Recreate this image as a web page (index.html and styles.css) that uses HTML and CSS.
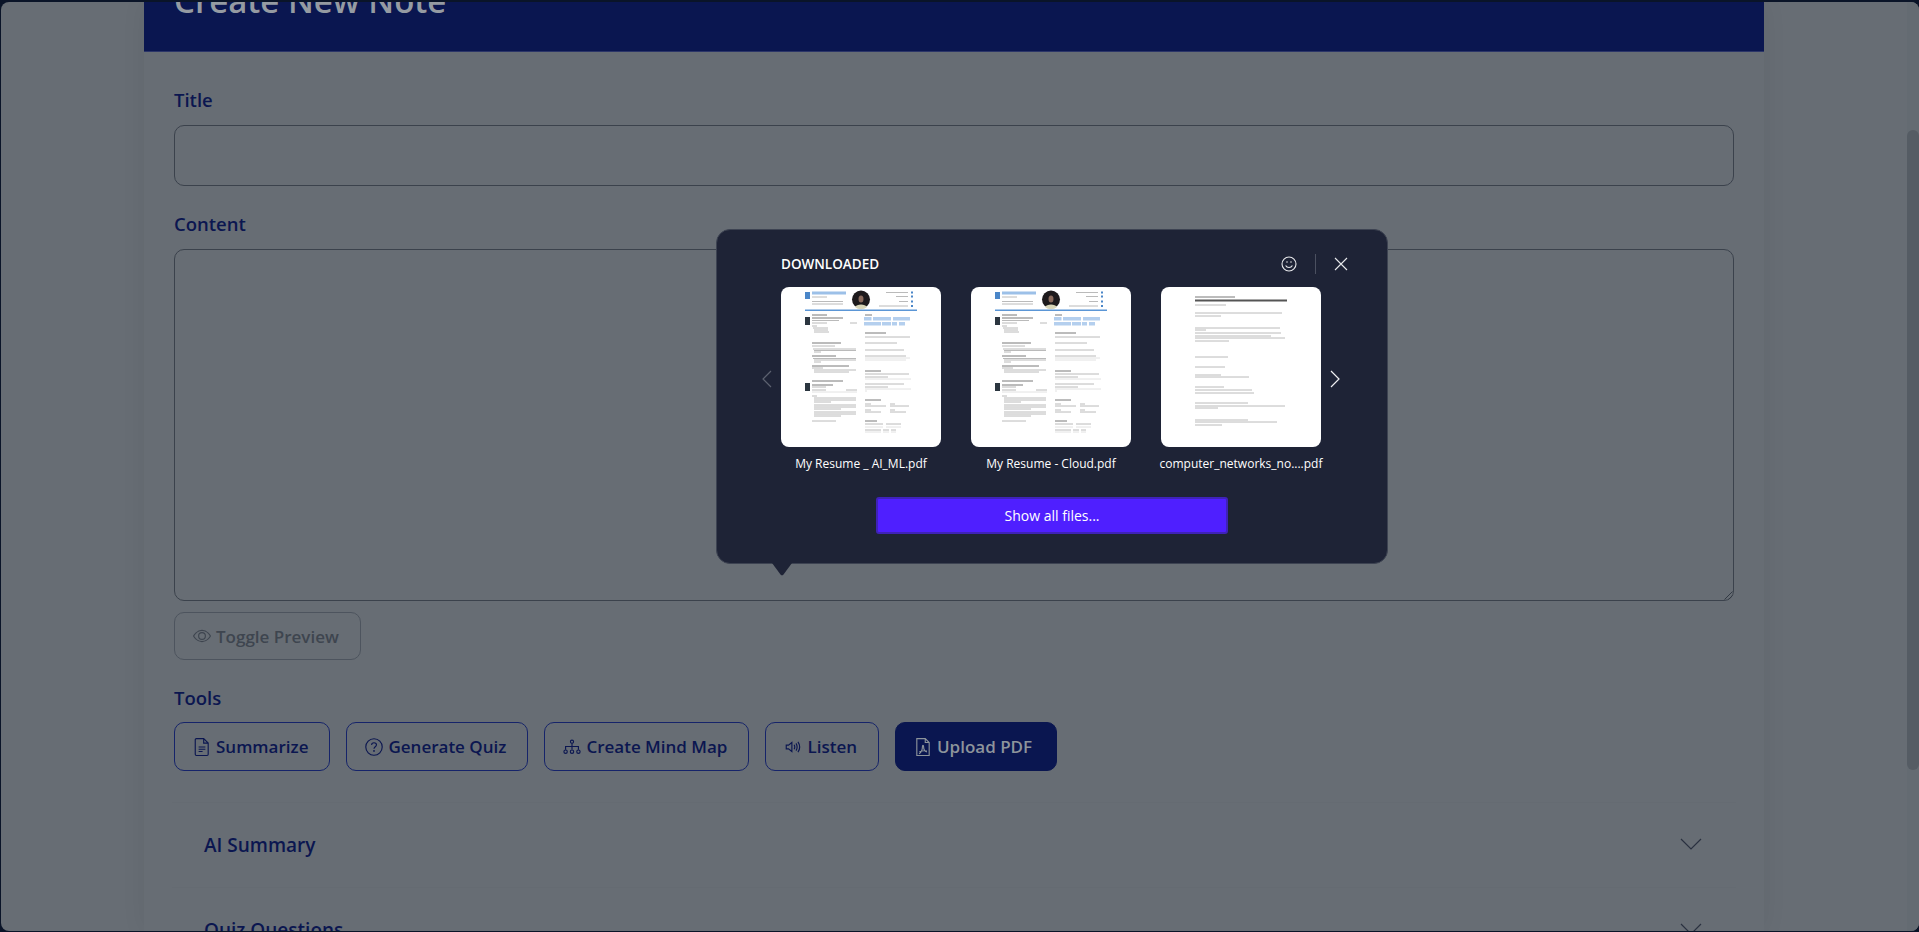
FILE: index.html
```html
<!DOCTYPE html>
<html>

<head>
	<meta charset="utf-8" />
	<title>Create New Note</title>
	<link rel="stylesheet" href="styles.css">
</head>

<body>
	<svg class="sprites" width="0" height="0">
		<symbol id="resume" viewBox="0 0 160 160">
			<rect x="24" y="5" width="5" height="7" fill="#4a86c8" />
			<path class="doc-name" d="M31 6H65" />
			<circle cx="80" cy="12.5" r="9" fill="#1d1a1c" />
			<path d="M74 20c1.500-3.500 10.500-3.500 12 0a9 9 0 0 1-12 0z" fill="#d9d6b8" />
			<ellipse cx="80" cy="12" rx="2.500" ry="3.500" fill="#8a6a5c" />
			<rect x="24" y="22.500" width="112" height="1.500" fill="#5b96d6" />
			<rect x="24" y="30" width="5" height="8" fill="#2c3640" />
			<rect x="24" y="96" width="5" height="8" fill="#2c3640" />
			<path class="doc-chip" d="M83 31.700H90.500M92 31.700H110M112 31.700H129M83 36.700H100M101 36.700H110M111 36.700H116M118 36.700H124" />
			<path class="doc-dot" d="M130 5.500H132M130 9.500H132M130 14.500H132M130 19H132" />
			<path class="doc-bold" d="M31 28H46M31 31H62M31 56H60M31 94H62M31 98H52M84 28H91M84 46H105M84 84H100M84 113H100M84 134H96M31 79H68M31 69H55" />
			<path class="doc-line" d="M31 10H46M31 14.500H62M31 17H62M105 5.500H127M115 9.500H127M118 14.500H127M98 19H127M31 33.500H58M31 36H46M69 36H76M31 39H36M32 41H47M33 43H47M33 45H48M31 59H54M32 62H75M33 63.500H75M33 65H40M32 71.500H75M33 73H75M33 75H40M31 81H42M33 83H75M33 85H68M31 100H45M31 103H45M65 103H76M31 109H36M33 111H75M33 113H75M33 115H50M33 118H75M33 120H75M33 122H60M33 125H75M33 127H75M33 129H60M31 134H55M84 50H129M84 56H116M84 63H123M84 69H125M84 87H128M84 90H107M84 97H123M84 100H107M84 117H90M109 117H114M84 119H105M109 119H128M84 123H90M109 123H114M84 125H100M109 125H125M84 137H102M105 137H120M84 143H100M102 143H108M110 143H115" />
			<path class="doc-faint" d="M84 71H129M84 73H125M84 92H130M84 102H130M84 104H86M31 105H76M84 140H102M105 140H120M84 145H100M102 145H108M110 145H115" />
		</symbol>
		<symbol id="notes" viewBox="0 0 160 160">
			<rect x="34" y="12.500" width="92" height="2" fill="#555" />
			<path class="doc-bold" d="M34 10H74" />
			<path class="doc-line" d="M34 18H65M34 26H121M34 29H60M34 41H119M34 43H45M34 46H120M34 49H110M34 51H124M34 54H68M34 70H67M34 80H64M34 88H60M34 90H88M34 100H63M34 103H91M34 106H93M34 116H87M34 119H124M34 121H57M34 133H87M34 135H116M34 138H61" />
		</symbol>
	</svg>

	<div class="window">
		<div class="page">
			<div class="sheet">
				<header class="sheet-head">
					<h1>Create New Note</h1>
				</header>
				<form class="note-form">
					<label class="field-label">Title</label>
					<input class="field-input" type="text" />
					<label class="field-label content-label">Content</label>
					<div class="field-area">
						<svg class="grip" width="10" height="10" viewBox="0 0 10 10">
							<path d="M9.500 1.500L1.500 9.500M9.500 5.500L5.500 9.500" />
						</svg>
					</div>
					<div class="preview-row">
						<button type="button" class="tool-btn toggle-btn">
							<svg class="icon" viewBox="0 0 16 16">
								<path d="M.5 8S3.300 3 8 3s7.500 5 7.500 5-2.800 5-7.500 5S.5 8 .5 8z" />
								<circle cx="8" cy="8" r="3" />
							</svg>
							Toggle Preview
						</button>
					</div>
					<label class="field-label tools-label">Tools</label>
					<div class="tool-row">
						<button type="button" class="tool-btn">
							<svg class="icon" viewBox="0 0 16 16">
								<path d="M3 .5h6.500L13.500 4.500v10a1 1 0 0 1-1 1h-9.500a1 1 0 0 1-1-1v-13a1 1 0 0 1 1-1zM9.500.5v4h4M5 8h6M5 10h6M5 12h3.500" />
							</svg>
							Summarize
						</button>
						<button type="button" class="tool-btn">
							<svg class="icon" viewBox="0 0 16 16">
								<circle cx="8" cy="8" r="7.300" />
								<path d="M5.800 6.100C5.900 4.800 6.800 4.200 8 4.200c1.300 0 2.200.8 2.200 1.900 0 1.700-2.200 1.700-2.200 3.500" />
								<circle class="icon-dot" cx="8" cy="11.500" r=".8" />
							</svg>
							Generate Quiz
						</button>
						<button type="button" class="tool-btn">
							<svg class="icon" viewBox="0 0 16 16">
								<circle cx="8" cy="3.300" r="1.400" />
								<path d="M8 4.700v5.600M2.300 10.500V7.500h11.400v3" />
								<circle cx="2.300" cy="12.200" r="1.500" />
								<circle cx="8" cy="12.200" r="1.500" />
								<circle cx="13.700" cy="12.200" r="1.500" />
							</svg>
							Create Mind Map
						</button>
						<button type="button" class="tool-btn">
							<svg class="icon" viewBox="0 0 16 16">
								<path d="M2 6.300h2l3-2.300v8l-3-2.300H2zM9 6c.7 1.200.7 2.800 0 4M10.700 4.800c1.200 2 1.200 4.400 0 6.400M12.400 3.400c1.900 2.800 1.900 6.400 0 9.200" />
							</svg>
							Listen
						</button>
						<button type="button" class="tool-btn upload-btn">
							<svg class="icon" viewBox="0 0 16 16">
								<path d="M2.500.5h7.500l3.500 3.500v11.500h-11zM10 .5V4h3.500" />
								<path d="M4.500 14c1.500-1 3-4 3-6.500 0-1.200 1-1.200 1 0 0 2.500 1.500 4.500 3 5M4.800 12.300c2-.9 4.500-1.200 6.700-.6" />
							</svg>
							Upload PDF
						</button>
					</div>
					<section class="accordion">
						<div class="accordion-row">
							<span>AI Summary</span>
							<svg class="chevron" width="22" height="12" viewBox="0 0 22 12"><path d="M1 1l10 10L21 1" /></svg>
						</div>
						<div class="accordion-row">
							<span>Quiz Questions</span>
							<svg class="chevron" width="22" height="12" viewBox="0 0 22 12"><path d="M1 1l10 10L21 1" /></svg>
						</div>
					</section>
				</form>
			</div>
		</div>
		<div class="scrollbar">
			<div class="scroll-thumb"></div>
		</div>

		<!-- downloads bubble -->
		<div class="bubble">
			<div class="bubble-head">
				<span class="bubble-title">DOWNLOADED</span>
				<div class="bubble-actions">
					<svg class="bubble-icon" width="16" height="16" viewBox="0 0 16 16">
						<circle cx="8" cy="8" r="7" />
						<path d="M4.600 9.500c1.500 2.600 5.300 2.600 6.800 0" />
						<path d="M6 5.300v1.400M10 5.300v1.400" />
					</svg>
					<span class="bubble-sep"></span>
					<svg class="bubble-icon" width="14" height="14" viewBox="0 0 14 14">
						<path d="M1 1l12 12M13 1L1 13" />
					</svg>
				</div>
			</div>
			<div class="carousel">
				<svg class="carousel-arrow off" width="10" height="18" viewBox="0 0 10 18"><path d="M9 1L1 9l8 8" /></svg>
				<div class="file-list">
					<div class="file-item">
						<svg class="file-thumb" width="160" height="160"><use href="#resume" /></svg>
						<span>My Resume _ AI_ML.pdf</span>
					</div>
					<div class="file-item">
						<svg class="file-thumb" width="160" height="160"><use href="#resume" /></svg>
						<span>My Resume - Cloud.pdf</span>
					</div>
					<div class="file-item">
						<svg class="file-thumb" width="160" height="160"><use href="#notes" /></svg>
						<span>computer_networks_no....pdf</span>
					</div>
				</div>
				<svg class="carousel-arrow" width="10" height="18" viewBox="0 0 10 18"><path d="M1 1l8 8-8 8" /></svg>
			</div>
			<button type="button" class="show-all">Show all files...</button>
			<svg class="bubble-tail" width="20" height="13" viewBox="0 0 20 13">
				<path d="M0 0h20L11.500 11.500a2 2 0 0 1-3 0z" />
			</svg>
		</div>
	</div>
</body>

</html>
```

FILE: styles.css
```css
* {
	box-sizing: border-box;
}

html,
body {
	height: 100%;
	margin: 0;
	overflow: hidden;
}

body {
	background: #0a1428;
	font-family: "Open Sans", "Noto Sans", sans-serif;
	padding: 2px 0 1px 1px;
}

.sprites {
	position: absolute;
}

.window {
	position: relative;
	display: flex;
	height: 100%;
	background: #676d74;
	border-radius: 8px;
	overflow: hidden;
}

.page {
	flex: 1;
	min-width: 0;
	overflow: hidden;
}

.sheet {
	width: 1620px;
	height: 100%;
	margin-left: 143px;
	background: #676d74;
	box-shadow: 0 0 24px rgba(0, 0, 0, 0.06);
}

.sheet-head {
	display: flex;
	align-items: flex-end;
	height: 50px;
	padding: 0 30px 38px;
	background: #0a1650;
	border-bottom: 1px solid #2b3568;
}

.sheet-head h1 {
	margin: 0;
	color: #959ba2;
	font-size: 33px;
	font-weight: 600;
	line-height: 24px;
	white-space: nowrap;
}

.note-form {
	display: flex;
	flex-direction: column;
	padding: 0 30px;
}

.field-label {
	color: #0b1650;
	font-size: 18.500px;
	font-weight: 600;
	line-height: 27px;
	margin-top: 34px;
	margin-bottom: 12px;
}

.content-label {
	margin-top: 24px;
}

.tools-label {
	margin-top: 24px;
	margin-bottom: 11px;
}

.field-input {
	height: 61px;
	background: transparent;
	border: 1px solid #3b424c;
	border-radius: 10px;
	outline: none;
}

.field-area {
	display: flex;
	align-items: flex-end;
	justify-content: flex-end;
	height: 352px;
	border: 1px solid #3b424c;
	border-radius: 10px;
}

.grip path {
	fill: none;
	stroke: #333a44;
}

.preview-row {
	margin-top: 11px;
}

.tool-row {
	display: flex;
	gap: 16px;
}

.tool-btn {
	display: inline-flex;
	align-items: center;
	gap: 5px;
	height: 49px;
	padding: 0 21px 0 18px;
	background: transparent;
	border: 1px solid #16246a;
	border-radius: 10px;
	color: #0b1650;
	font-family: inherit;
	font-size: 17px;
	font-weight: 600;
}

.toggle-btn {
	height: 48px;
	border-color: #4d545e;
	color: #3e454f;
}

.upload-btn {
	padding-right: 24px;
	background: #0a1650;
	border-color: #0a1650;
	color: #8d949b;
}

.icon {
	width: 18px;
	height: 18px;
	flex: none;
	fill: none;
	stroke: currentColor;
	stroke-width: 1;
}

.icon-dot {
	fill: currentColor;
	stroke: none;
}

.accordion {
	margin: 31px -2px 0;
	border-top: 1px solid #656b72;
}

.accordion-row {
	display: flex;
	align-items: center;
	justify-content: space-between;
	height: 85px;
	padding: 0 34px 0 32px;
	border-bottom: 1px solid #656b72;
	color: #0b1650;
	font-size: 19px;
	font-weight: 600;
}

.chevron {
	margin-top: -3px;
}

.chevron path {
	fill: none;
	stroke: #2a3140;
	stroke-width: 1.200;
}

.scrollbar {
	width: 12px;
	flex: none;
	padding-top: 128px;
	background: #646b72;
}

.scroll-thumb {
	height: 640px;
	background: #555c64;
	border-radius: 6px;
}

/* bubble sits over the dimmed page */
.bubble {
	position: absolute;
	left: 715px;
	top: 227px;
	width: 672px;
	height: 335px;
	display: flex;
	flex-direction: column;
	align-items: center;
	background: #1e2336;
	border: 1px solid #3d4352;
	border-radius: 14px;
	color: #fff;
}

.bubble-head {
	display: flex;
	align-items: center;
	justify-content: space-between;
	width: 100%;
	height: 57px;
	padding: 10px 39px 0 64px;
}

.bubble-title {
	font-size: 13.500px;
	font-weight: 600;
}

.bubble-actions {
	display: flex;
	align-items: center;
	gap: 18px;
}

.bubble-icon {
	fill: none;
	stroke: #e8e9ec;
	stroke-width: 1.100;
}

.bubble-sep {
	width: 1px;
	height: 20px;
	background: #4b5060;
}

.carousel {
	display: flex;
	gap: 9px;
	padding-right: 2px;
}

.carousel-arrow {
	flex: none;
	margin-top: 83px;
	fill: none;
	stroke: #f0f0f3;
	stroke-width: 1.200;
}

.carousel-arrow.off {
	stroke: #5d6270;
}

.file-list {
	display: flex;
	gap: 30px;
}

.file-item {
	display: flex;
	flex-direction: column;
	align-items: center;
	width: 160px;
	font-size: 12px;
	line-height: 34px;
	white-space: nowrap;
}

.file-thumb {
	background: #fff;
	border-radius: 8px;
}

.doc-name,
.doc-line,
.doc-bold,
.doc-faint,
.doc-chip,
.doc-dot {
	fill: none;
}

.doc-name {
	stroke: #9cc0e8;
	stroke-width: 3;
}

.doc-bold {
	stroke: #6a6a6a;
	stroke-width: 0.900;
}

.doc-line {
	stroke: #a8a8a8;
	stroke-width: 0.800;
}

.doc-faint {
	stroke: #dadada;
	stroke-width: 0.800;
}

.doc-chip {
	stroke: #b4cfee;
	stroke-width: 3.500;
}

.doc-dot {
	stroke: #4a86c8;
	stroke-width: 2;
}

.show-all {
	width: 352px;
	height: 37px;
	margin-top: 16px;
	background: #4f1fff;
	border: 2px solid #3f22b8;
	border-radius: 3px;
	color: #fff;
	font-family: inherit;
	font-size: 14px;
}

.bubble-tail {
	position: absolute;
	left: 55px;
	top: 100%;
	fill: #1e2336;
}
```
